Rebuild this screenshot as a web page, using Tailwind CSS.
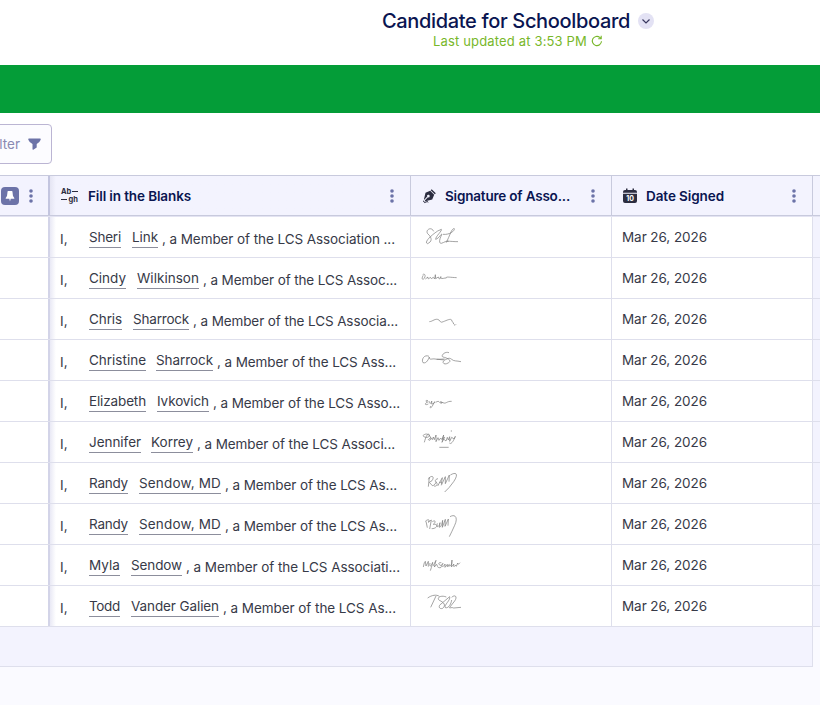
<!DOCTYPE html>
<html lang="en">
  <head>
    <meta charset="UTF-8" />
    <meta name="viewport" content="width=device-width, initial-scale=1.0" />
    <title>Candidate for Schoolboard</title>
    <script src="https://cdn.jsdelivr.net/npm/@tailwindcss/browser@4"></script>
  </head>
  <body class="h-[705px] overflow-hidden bg-white font-['Inter','Liberation_Sans',sans-serif] text-[13.5px] text-[#373a48]">
    <header class="flex h-[65px] flex-col pt-[9px]">
      <div class="ml-[382px] flex h-6 items-center gap-2">
        <h1 class="text-xl leading-6 font-medium whitespace-nowrap text-[#0a1551]"><span data-fit="248">Candidate for Schoolboard</span></h1>
        <span class="flex size-4 items-center justify-center rounded-full bg-[#e3e2f4]">
          <svg class="size-4" viewBox="0 0 16 16" fill="none" stroke="#38385e" stroke-width="1.2"><path d="M4.5 6.5 8 10l3.5-3.5" /></svg>
        </span>
      </div>
      <div class="ml-[433px] flex h-4 items-center gap-1 text-[13px] text-[#78b72a]">
        <span class="pt-px whitespace-nowrap" data-fit="154">Last updated at 3:53 PM</span>
        <svg class="size-3" viewBox="0 0 12 12" fill="none" stroke="currentColor" stroke-width="1.1"><path d="M10.5 6.3A4.6 4.6 0 1 1 8.8 2.4L10 3.6M10.2 .8v3H7.2" /></svg>
      </div>
    </header>

    <div class="h-12 bg-[#049d38]"></div>

    <!-- Toolbar -->
    <div class="flex h-[62px] items-start pt-[11px]">
      <button class="-ml-4 flex h-10 w-[68px] items-center justify-end rounded border border-[#bbb5d3] bg-[#fcfcff] pr-2.5 text-[#8a8ab2]">
        <span class="mr-2 pt-px whitespace-nowrap" data-fit="32">Filter</span>
        <svg class="h-3 w-[13px]" viewBox="0 0 13 12" fill="#6c73a8"><path d="M1 .5h11q1 0 .7 1.2Q12 4 8.7 6v3.5L5.3 11.7Q4.5 12 4.5 11V6Q1 4 .3 1.7 0 .5 1 .5z" /></svg>
      </button>
    </div>

    <!-- Table -->
    <main class="h-[530px] bg-[#fafaff]">
      <div class="flex h-[41px] border-y border-t-[#c8cadd] border-b-[#c8cadd] bg-[#f3f3fe] font-semibold text-[#0a1551]">
        <div class="flex w-[50px] items-center border-r-2 border-[#c3c5df] pl-px">
          <span class="flex size-[18px] items-center justify-center rounded bg-[#6c73a8]">
            <svg class="size-3" viewBox="0 0 12 12" fill="#fff"><path d="M4 1h4q.6 0 .6 2l.4 3 1.3 2v.8H6.7L6 11.5l-.7-2.7H1.7V8L3 6l.4-3Q3.4 1 4 1z" /></svg>
          </span>
          <svg class="ml-[10px] h-4 w-1" viewBox="0 0 4 16" fill="#6c73a8"><circle cx="2" cy="3" r="1.8" /><circle cx="2" cy="8" r="1.8" /><circle cx="2" cy="13" r="1.8" /></svg>
        </div>
        <div class="flex w-[361px] items-center border-r border-[#c8cadd] bg-linear-to-r from-[#e5e5f3] from-0% to-[#f3f3fe] to-[6px] pr-4 pl-[11px]">
          <span class="flex w-[17px] flex-col text-[7.5px] leading-[8px] font-bold text-[#2c2d40]">
            <span class="flex items-center justify-between">Ab<i class="h-[1.5px] w-[6px] bg-[#2c2d40]"></i></span>
            <span class="flex items-center justify-between"><i class="h-[1.5px] w-[6px] bg-[#2c2d40]"></i>gh</span>
          </span>
          <span class="ml-[10px] pt-0.5 whitespace-nowrap" data-fit="103">Fill in the Blanks</span>
          <svg class="ml-auto h-4 w-1" viewBox="0 0 4 16" fill="#6c73a8"><circle cx="2" cy="3" r="1.8" /><circle cx="2" cy="8" r="1.8" /><circle cx="2" cy="13" r="1.8" /></svg>
        </div>
        <div class="flex w-[201px] items-center border-r border-[#c8cadd] pr-4 pl-[11px]">
          <svg class="h-4 w-[15px]" viewBox="0 0 15 16" fill="#2c2d40"><path d="M9.7 1.2 13.8 5.3 12.8 6.3 8.7 2.2zM8.2 2.8 12.2 6.8 10.2 11.4 3.4 13.2 2.8 12.6 6 9.3A1.3 1.3 0 1 0 5.2 8.6L2.2 11.8 1.9 11.5 3.5 4.7z" /><path d="M1 13.5q1-1.2 1 .3t2 .2 2 .5" fill="none" stroke="#2c2d40" /></svg>
          <span class="ml-2 pt-0.5 whitespace-nowrap" data-fit="125">Signature of Asso...</span>
          <svg class="ml-auto h-4 w-1" viewBox="0 0 4 16" fill="#6c73a8"><circle cx="2" cy="3" r="1.8" /><circle cx="2" cy="8" r="1.8" /><circle cx="2" cy="13" r="1.8" /></svg>
        </div>
        <div class="flex w-[201px] items-center border-r border-[#c8cadd] pr-4 pl-[11px]">
          <svg class="h-4 w-[14px]" viewBox="0 0 14 16" fill="#2c2d40">
            <path d="M3 .5h1.5V2h5V.5H11V2h1q2 0 2 2v.8H0V4q0-2 2-2h1zM0 5.7h14V13q0 2-2 2H2q-2 0-2-2z" />
            <text x="7" y="13" fill="#fff" font-size="7" font-weight="700" text-anchor="middle">10</text>
          </svg>
          <span class="ml-[9px] pt-0.5 whitespace-nowrap" data-fit="78">Date Signed</span>
          <svg class="ml-auto h-4 w-1" viewBox="0 0 4 16" fill="#6c73a8"><circle cx="2" cy="3" r="1.8" /><circle cx="2" cy="8" r="1.8" /><circle cx="2" cy="13" r="1.8" /></svg>
        </div>
      </div>
      <div class="h-px bg-[#e3e3f2]"></div>
      <div id="rows" class="bg-[#f3f3fe]"></div>
      <div class="h-10 w-[813px] border-r border-b border-[#dedfec] bg-[#f3f3fe]"></div>
    </main>

    <script>
      // name, name width, surname, surname width, gap, text, text width, signature viewBox, signature path
      const rows = [
        ["Sheri", 32, "Link", 26, 11, "Association ...", 233, "3 21 180 120", "M71 64C64 48 45 60 53 71C68 84 66 96 52 101C43 97 58 80 83 63L94 58C98 61 76 80 77 88C88 85 93 70 96 73C89 84 85 101 94 100C104 97 109 91 116 94M99 73C119 75 134 63 133 56C125 53 119 79 109 97C112 91 119 95 144 95"],
        ["Cindy", 37, "Wilkinson", 62, 11, "Assoc...", 194, "3 144 180 120", "M38 194C42 190 49 194 43 205C35 213 35 202 40 196M46 207L54 201C51 208 58 207 61 202L64 206 70 202 74 207 76 194 77 206 85 201 88 207C98 201 91 196 91 204C96 208 104 203 109 204C108 199 117 202 140 203"],
        ["Chris", 33, "Sharrock", 56, 11, "Associa...", 205, "3 -3 180 120", "M58 65C68 65 76 53 87 60C92 65 91 69 100 65C110 61 122 55 125 60C125 65 130 66 131 72L135 76 138 73"],
        ["Christine", 57, "Sharrock", 57, 10, "Ass...", 179, "3 120 180 120", "M57 169C43 162 33 179 39 188C50 192 56 176 58 171C57 182 67 175 75 177L103 180M80 178L104 177M117 158C104 153 91 168 99 171C112 174 127 181 116 188C103 197 94 188 103 181C115 174 119 173 125 178C131 184 140 182 153 185"],
        ["Elizabeth", 57, "Ivkovich", 52, 11, "Asso...", 187, "3 3 180 120", "M54 62C45 59 47 66 53 66C42 71 45 77 55 72M57 63C59 78 66 65 65 63L65 72C71 72 76 66 74 65L66 80C60 86 58 82 63 78M77 67C89 60 86 68 92 69C101 72 94 62 91 66L99 68C108 73 110 63 125 64"],
        ["Jennifer", 52, "Korrey", 42, 10, "Associ...", 198, "3 126 180 120", "M43 187C48 168 53 159 58 164C61 171 50 174 43 171L39 167C45 160 56 160 61 171C66 175 59 185 55 179L62 173 67 179 70 171 73 179 78 165 78 185 84 173 87 181 92 174 96 179 101 165 96 187 104 172 98 175 108 183 112 172 115 180 119 170 119 184 125 172 132 177 136 169C130 185 123 194 118 189M124 151V155M88 202H116"],
        ["Randy", 39, "Sendow, MD", 82, 11, "As...", 172, "3 9 180 120", "M55 80 58 51M55 58C62 44 76 48 66 62L58 67 67 77C74 77 77 69 79 65M84 56C74 58 74 65 80 68C84 74 79 80 72 78M83 78L97 53 94 73M88 67H95M94 76L106 50 106 71 118 45 117 65M121 45C140 34 146 43 131 65Q117 85 104 96"],
        ["Randy", 39, "Sendow, MD", 82, 11, "As...", 172, "3 132 180 120", "M48 184 52 203M46 184C55 175 62 181 54 187L64 180 59 207M67 185C78 178 77 188 70 193C87 191 82 206 65 206M82 190C78 205 88 202 90 188L88 202C95 201 96 188 98 181L97 202 106 178 105 199 115 177 114 197M120 170C138 160 144 176 134 196Q126 214 118 230"],
        ["Myla", 31, "Sendow", 51, 11, "Associati...", 214, "3 0 180 120", "M40 66 43 53 46 49 48 63 55 49 55 65M60 54C57 71 66 60 68 52L64 68 61 77M69 63 78 46 73 66 80 58 83 65M94 53C83 52 85 59 92 61C99 67 89 71 83 66M95 61C103 55 98 52 95 60C96 67 102 65 105 57L105 67 112 58 112 65C119 56 118 56 116 64L125 59 126 45 124 66 132 57C127 66 134 67 136 60L139 64 143 54 145 58 150 53"],
        ["Todd", 31, "Vander Galien", 88, 11, "As...", 173, "3 123 180 120", "M53 159C65 150 80 148 88 154M78 153 62 187M109 156C91 149 79 159 88 166C102 172 109 181 98 190C87 194 84 182 93 177L119 155C123 165 101 180 106 188C117 191 124 174 125 165M125 157C136 147 143 156 134 168L119 187C117 192 124 185 131 189L153 187"],
      ];

      document.getElementById("rows").innerHTML = rows.map(([first, w1, last, w2, gap, text, w3, box, sig]) => `
        <div class="flex h-[41px] border-b border-[#dedfec]">
          <div class="w-[50px] border-r-2 border-[#d3d4e8] bg-white"></div>
          <div class="flex w-[361px] items-start overflow-hidden border-r border-[#dedfec] bg-linear-to-r from-[#e9e9f5] from-0% to-white to-[6px] pl-[10px] whitespace-nowrap">
            <span class="mt-[12px] w-[29px] leading-5">I,</span>
            <span class="mt-[10px] h-[21px] border-b border-[#8c8e9c] leading-5" style="width:${w1}px"><span data-fit="${w1}">${first}</span></span>
            <span class="mt-[10px] h-[21px] border-b border-[#8c8e9c] leading-5" style="width:${w2}px;margin-left:${gap}px"><span data-fit="${w2}">${last}</span></span>
            <span class="mt-[12px] ml-1 leading-5"><span data-fit="${w3}">, a Member of the LCS ${text}</span></span>
          </div>
          <div class="w-[201px] border-r border-[#dedfec] bg-white">
            <svg class="h-10 w-[60px]" viewBox="${box}" fill="none" stroke="#777" stroke-width="2"><path d="${sig}" /></svg>
          </div>
          <div class="w-[201px] border-r border-[#dedfec] bg-white pt-[10px] pl-[10px] leading-5"><span data-fit="85">Mar 26, 2026</span></div>
        </div>`).join("");

      function fitLabels() {
        document.querySelectorAll("[data-fit]").forEach((el) => {
          el.style.letterSpacing = "0px";
          const width = el.getBoundingClientRect().width;
          el.style.letterSpacing = (Number(el.dataset.fit) - width) / el.textContent.length + "px";
        });
      }
      fitLabels();
      window.addEventListener("load", fitLabels);
      document.fonts.ready.then(fitLabels);
    </script>
  </body>
</html>
